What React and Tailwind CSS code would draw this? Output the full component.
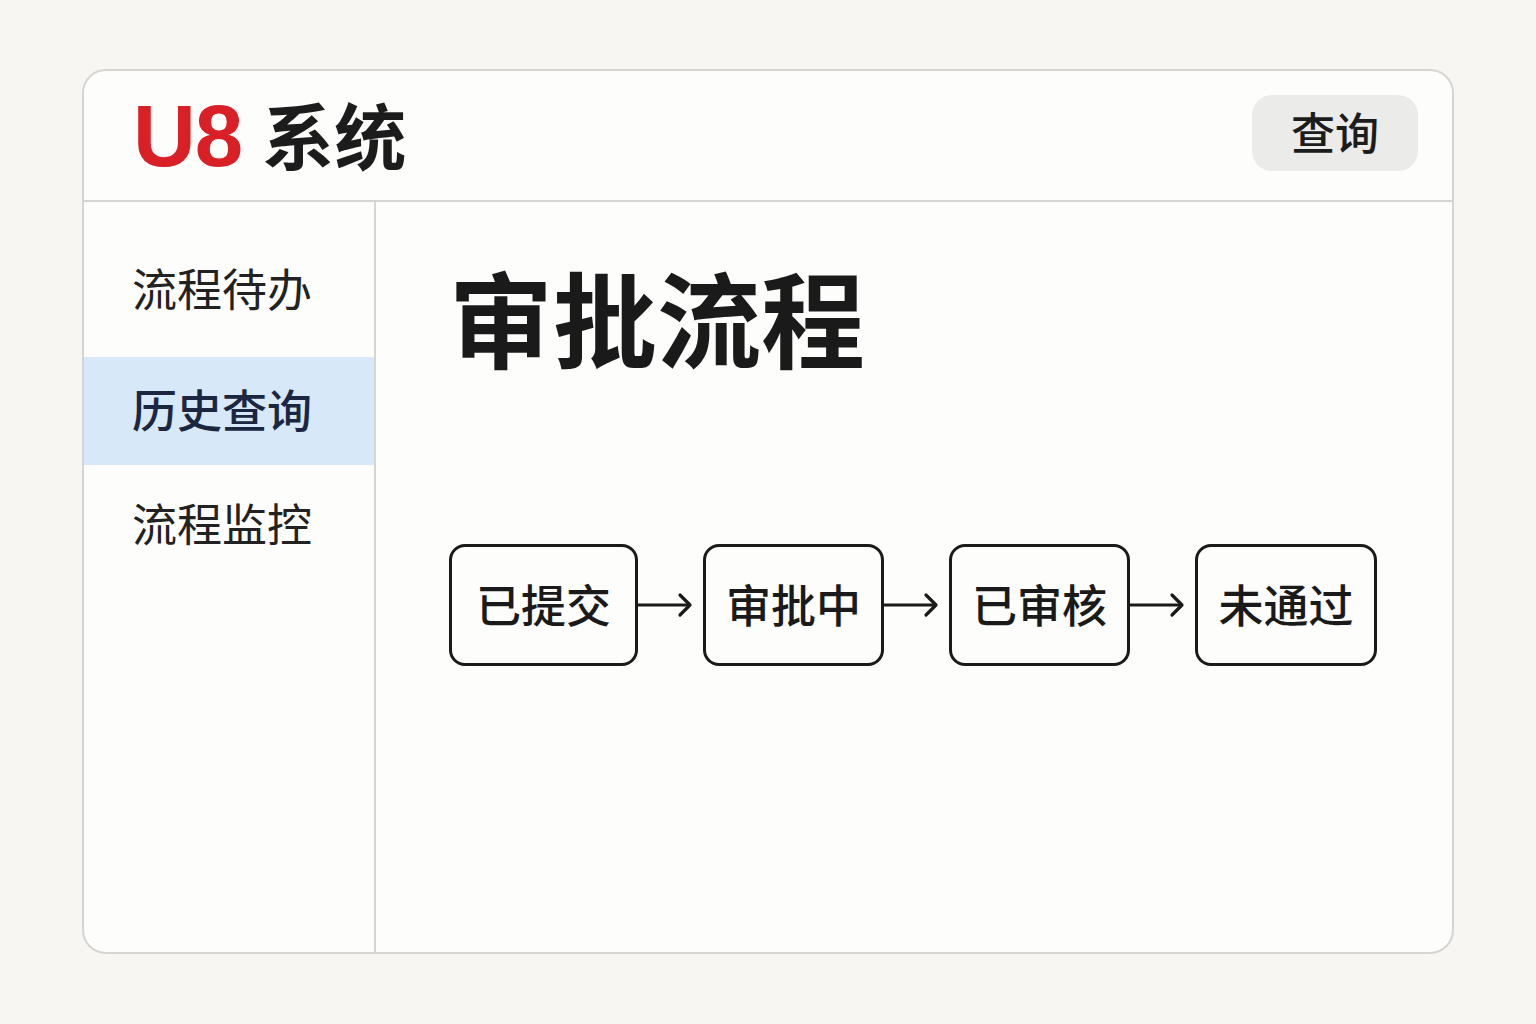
import React from 'react';

const cjk = { fontFamily: '"Noto Sans CJK SC", "Noto Sans", sans-serif' };

const navItems = [
  { label: '流程待办', active: false, cls: 'mt-[34px] h-[108px]' },
  { label: '历史查询', active: true, cls: 'mt-[13px] h-[108px]' },
  { label: '流程监控', active: false, cls: 'h-[120px]' },
];

const steps = [
  { label: '已提交', w: 'w-[189px]' },
  { label: '审批中', w: 'w-[181px]' },
  { label: '已审核', w: 'w-[181px]' },
  { label: '未通过', w: 'w-[182px]' },
];

const Arrow = () => (
  <svg width="65" height="30" viewBox="0 0 65 30" className="shrink-0">
    <line x1="0" y1="15" x2="51" y2="15" stroke="#1a1a1a" strokeWidth="3" />
    <polyline points="42,5 52,15 42,25" fill="none" stroke="#1a1a1a" strokeWidth="3.2" strokeLinecap="round" strokeLinejoin="round" />
  </svg>
);

const App = () => {
  return (
    <div className="min-h-screen w-full flex justify-center pt-[69px] bg-[#f7f6f3]" style={cjk}>
      <div className="w-[1372px] h-[885px] flex flex-col bg-[#fdfdfb] border-2 border-[#d5d5d2] rounded-[24px] overflow-hidden">
        {/* Header */}
        <header className="h-[131px] shrink-0 flex items-center justify-between border-b-2 border-[#d5d5d2] pl-[49px] pr-[34px]">
          <div className="flex items-center gap-[20px] pb-[6px]">
            <span className="text-[87px] leading-none font-bold text-[#d92027] tracking-[-1px] pt-[6px]" style={{ fontFamily: '"Liberation Sans", Arial, sans-serif' }}>
              U8
            </span>
            <span className="text-[72px] leading-none font-bold text-[#1c1c1c]">系统</span>
          </div>
          <button className="w-[166px] h-[76px] mb-[5px] rounded-[20px] bg-[#ebebea] text-[44px] font-medium text-[#1c1c1c] leading-none flex items-center justify-center pb-[4px]">
            查询
          </button>
        </header>

        <div className="flex flex-1 min-h-0">
          {/* Sidebar */}
          <aside className="w-[292px] shrink-0 border-r-2 border-[#d5d5d2] flex flex-col">
            {navItems.map((item) => (
              <div
                key={item.label}
                className={`${item.cls} flex items-center pl-[48px] pb-[6px] text-[45px] leading-none ${
                  item.active ? 'bg-[#d7e8f9] text-[#1b2740] font-medium' : 'text-[#222222]'
                }`}
              >
                {item.label}
              </div>
            ))}
          </aside>

          {/* Main */}
          <main className="flex-1 pl-[73px] pt-[58px]">
            <h1 className="text-[104px] leading-[112px] font-bold text-[#1a1a1a]">审批流程</h1>
            <div className="mt-[172px] flex items-center">
              {steps.map((s, i) => (
                <React.Fragment key={s.label}>
                  <div
                    className={`${s.w} h-[122px] shrink-0 border-[3px] border-[#1a1a1a] rounded-[16px] flex items-center justify-center pb-[4px] text-[45px] font-medium text-[#1a1a1a] leading-none`}
                  >
                    {s.label}
                  </div>
                  {i < steps.length - 1 && <Arrow />}
                </React.Fragment>
              ))}
            </div>
          </main>
        </div>
      </div>
    </div>
  );
};

export default App;
